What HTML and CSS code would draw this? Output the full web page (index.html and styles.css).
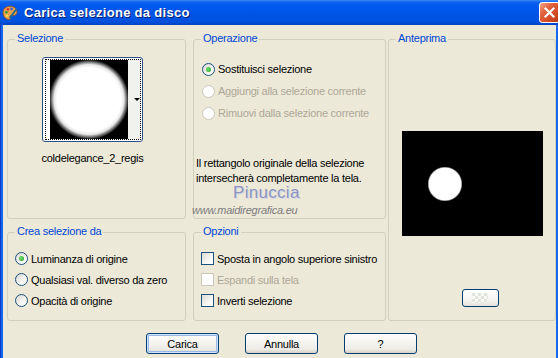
FILE: index.html
```html
<!DOCTYPE html>
<html>
<head>
  <meta charset="UTF-8">
  <title>Carica selezione da disco</title>
  <link rel="stylesheet" href="styles.css">
</head>
<body>
  <div class="window">
    <div class="titlebar">
      <svg class="app-icon" width="16" height="16" viewBox="0 0 16 16">
        <path d="M8 1.2C3.8 1.2 1 4 1 7.6 1 11.2 3.6 14.6 7 14.6c1.5 0 1.7-1 1.1-2-.6-1 .1-2 1.3-2H11c2.4 0 4-1.4 4-3.4C15 3.6 12.2 1.2 8 1.2z" fill="#eba04c" stroke="#8a4e1c" stroke-width=".8"/>
        <circle cx="4.4" cy="7.2" r="1.3" fill="#2c9c3c"/>
        <circle cx="6" cy="4.2" r="1.3" fill="#d63030"/>
        <circle cx="9.6" cy="3.9" r="1.3" fill="#2f5fd6"/>
        <circle cx="4.9" cy="10.8" r="1.2" fill="#f3e245"/>
        <path d="M14.2 4.2L8.2 12.6" stroke="#1f6c8c" stroke-width="1.8" stroke-linecap="round"/>
      </svg>
      <span class="title">Carica selezione da disco</span>
      <div class="close">
        <svg width="13" height="13" viewBox="0 0 13 13">
          <path d="M2.5 2.5L10.5 10.5M10.5 2.5L2.5 10.5" stroke="#fff" stroke-width="2.2" stroke-linecap="square"/>
        </svg>
      </div>
    </div>

    <div class="client">
      <div class="panes">
        <div class="group g-sel">
          <span class="legend">Selezione</span>
          <div class="thumb-wrap">
            <div class="thumb">
              <div class="thumb-focus">
                <div class="thumb-img"></div>
                <div class="thumb-strip"><span class="arrow"></span></div>
              </div>
            </div>
            <div class="thumb-name">coldelegance_2_regis</div>
          </div>
        </div>

        <div class="group g-op">
          <span class="legend">Operazione</span>
          <div class="opt-list">
            <div class="opt"><span class="radio checked"></span>Sostituisci selezione</div>
            <div class="opt disabled"><span class="radio"></span>Aggiungi alla selezione corrente</div>
            <div class="opt disabled"><span class="radio"></span>Rimuovi dalla selezione corrente</div>
          </div>
          <p class="note">Il rettangolo originale della selezione<br>intersecherà completamente la tela.</p>
        </div>

        <div class="group g-prev">
          <span class="legend">Anteprima</span>
          <div class="preview"></div>
          <div class="small-btn"><span class="checker"></span></div>
        </div>

        <div class="group g-crea">
          <span class="legend">Crea selezione da</span>
          <div class="opt-list tight">
            <div class="opt"><span class="radio checked"></span>Luminanza di origine</div>
            <div class="opt"><span class="radio"></span>Qualsiasi val. diverso da zero</div>
            <div class="opt"><span class="radio"></span>Opacità di origine</div>
          </div>
        </div>

        <div class="group g-opz">
          <span class="legend">Opzioni</span>
          <div class="opt-list tight">
            <div class="opt"><span class="check"></span>Sposta in angolo superiore sinistro</div>
            <div class="opt disabled"><span class="check"></span>Espandi sulla tela</div>
            <div class="opt"><span class="check"></span>Inverti selezione</div>
          </div>
        </div>
      </div>

      <div class="buttons">
        <div class="btn default">Carica</div>
        <div class="btn">Annulla</div>
        <div class="btn">?</div>
      </div>

      <div class="watermark">
        <span class="wm-name">Pinuccia</span>
        <span class="wm-url">www.maidiregrafica.eu</span>
      </div>
    </div>
  </div>
</body>
</html>
```

FILE: styles.css
```css
body {
  margin: 0;
  font-family: "Liberation Sans", Arial, sans-serif;
  font-size: 11px;
  letter-spacing: -0.25px;
  color: #000;
}
.window {
  width: 558px;
  height: 358px;
  display: flex;
  flex-direction: column;
  overflow: hidden;
  background: linear-gradient(90deg, #0a3cc8 0 1px, #1766ee 1px);
}

/* title bar */
.titlebar {
  height: 25px;
  flex: none;
  display: flex;
  align-items: center;
  padding-left: 2px;
  background: linear-gradient(#3d8cf5 0, #0f62ee 2px, #0058ee 6px, #0055e5 55%, #0052df 85%, #0043c4 100%);
}
.app-icon {
  flex: none;
  margin-top: 1px;
}
.title {
  margin-left: 6px;
  color: #fff;
  font-weight: bold;
  font-size: 13px;
  letter-spacing: 0.3px;
  text-shadow: 1px 1px #0a1f6e;
}
.close {
  margin-left: auto;
  margin-right: -2px;
  width: 21px;
  height: 21px;
  box-sizing: border-box;
  border: 1px solid #fff;
  border-radius: 3px;
  background: linear-gradient(135deg, #f4a688 0, #e3603b 35%, #d24a22 70%, #b8380f 100%);
  display: flex;
  align-items: center;
  justify-content: center;
}

/* client area */
.client {
  flex: 1;
  position: relative;
  margin: 0 2px 0 3px;
  padding: 14px 0 0 4px;
  background: #ece9d8;
}
.panes {
  display: grid;
  grid-template-columns: 179px 200px 170px;
  grid-template-rows: 180px 89px;
  row-gap: 13px;
}
.group {
  position: relative;
  border: 1px solid #d0d0bf;
  border-radius: 3px;
  box-sizing: border-box;
}
.legend {
  position: absolute;
  top: -8px;
  left: 7px;
  padding: 0 2px;
  line-height: 13px;
  color: #0046d5;
  background: #ece9d8;
}
.g-sel { grid-column: 1; grid-row: 1; padding: 17px 0 0 34px; }
.g-op { grid-column: 2; grid-row: 1; width: 193px; justify-self: end; padding: 18px 0 0 2px; }
.g-prev {
  grid-column: 3;
  grid-row: 1 / 3;
  width: 168px;
  justify-self: end;
  display: flex;
  flex-direction: column;
  align-items: center;
  padding-top: 91px;
}
.g-crea { grid-column: 1; grid-row: 2; padding: 15px 0 0 7px; }
.g-opz { grid-column: 2; grid-row: 2; width: 193px; justify-self: end; padding: 15px 0 0 7px; }

/* selection thumbnail */
.thumb-wrap {
  width: 101px;
  display: flex;
  flex-direction: column;
  align-items: center;
}
.thumb {
  width: 101px;
  height: 85px;
  box-sizing: border-box;
  border: 1px solid #2a4f80;
  border-radius: 3px;
  padding: 1px 1px 1px 2px;
  background: #fff;
}
.thumb-focus {
  height: 100%;
  box-sizing: border-box;
  border: 1px dotted #000;
  padding-left: 4px;
  display: flex;
}
.thumb-img {
  width: 78px;
  height: 79px;
  flex: none;
  background: radial-gradient(circle, #fff 0, #fff 32px, #e6e6e6 35px, #5a5a5a 38px, #000 40px);
}
.thumb-strip {
  flex: 1;
  background: #f1f1ed;
  display: flex;
  align-items: center;
  justify-content: flex-end;
}
.arrow {
  width: 0;
  height: 0;
  border-left: 3px solid transparent;
  border-right: 3px solid transparent;
  border-top: 3px solid #000;
}
.thumb-name {
  margin-top: 10px;
  line-height: 13px;
  white-space: nowrap;
}

/* radios and checkboxes */
.opt-list {
  margin-left: 6px;
}
.opt-list.tight {
  margin-left: 0;
}
.opt {
  display: flex;
  align-items: center;
  gap: 3px;
  height: 22px;
  white-space: nowrap;
}
.tight .opt {
  height: 21px;
}
.opt.disabled {
  color: #aca899;
}
.radio {
  position: relative;
  flex: none;
  width: 13px;
  height: 13px;
  box-sizing: border-box;
  border: 1px solid #1c5180;
  border-radius: 50%;
  background: linear-gradient(135deg, #d8d6ce, #f6f6f3 60%, #fff);
}
.radio.checked::after {
  content: "";
  position: absolute;
  left: 3px;
  top: 3px;
  width: 5px;
  height: 5px;
  border-radius: 50%;
  background: radial-gradient(circle at 40% 40%, #6fe06f, #21a121);
}
.disabled .radio,
.disabled .check {
  border-color: #cac8bb;
  background: #fff;
}
.check {
  flex: none;
  width: 13px;
  height: 13px;
  box-sizing: border-box;
  border: 1px solid #1c5180;
  background: linear-gradient(135deg, #dcdad2, #f6f6f3 60%, #fff);
}
.note {
  margin: 32px 0 0;
  line-height: 15px;
}

/* preview */
.preview {
  width: 141px;
  height: 105px;
  background: radial-gradient(circle at 43px 53px, #fff 0, #fff 16px, #000 17.5px);
}
.small-btn {
  margin: 53px 0 0 16px;
  width: 37px;
  height: 18px;
  box-sizing: border-box;
  border: 1px solid #003c74;
  border-radius: 3px;
  background: linear-gradient(#fff, #f3f2ee 70%, #e4e1d8);
  display: flex;
  align-items: center;
  justify-content: center;
}
.checker {
  width: 16px;
  height: 10px;
  background: repeating-conic-gradient(#f7f7f4 0 25%, #e3e3de 0 50%) 0 0 / 6px 6px;
}

/* dialog buttons */
.buttons {
  display: flex;
  gap: 26px;
  padding: 12px 0 0 139px;
}
.btn {
  width: 73px;
  height: 21px;
  box-sizing: border-box;
  border: 1px solid #003c74;
  border-radius: 3px;
  background: linear-gradient(#fff, #f5f4f0 45%, #ecebe6 80%, #d8d2c6);
  display: flex;
  align-items: center;
  justify-content: center;
}
.btn.default {
  box-shadow: inset 0 0 0 1px #cee4fc, inset 0 0 0 2px #9abbea;
}

/* watermark over the panes */
.watermark {
  position: absolute;
  left: 189px;
  top: 158px;
  display: flex;
  flex-direction: column;
  align-items: flex-start;
}
.wm-name {
  margin-left: 41px;
  font-size: 17px;
  line-height: 20px;
  letter-spacing: 0.3px;
  color: #8c93c0;
  text-shadow: 1px 1px #d6d8e6;
}
.wm-url {
  font-style: italic;
  line-height: 14px;
  color: #7c7c7c;
}
```
